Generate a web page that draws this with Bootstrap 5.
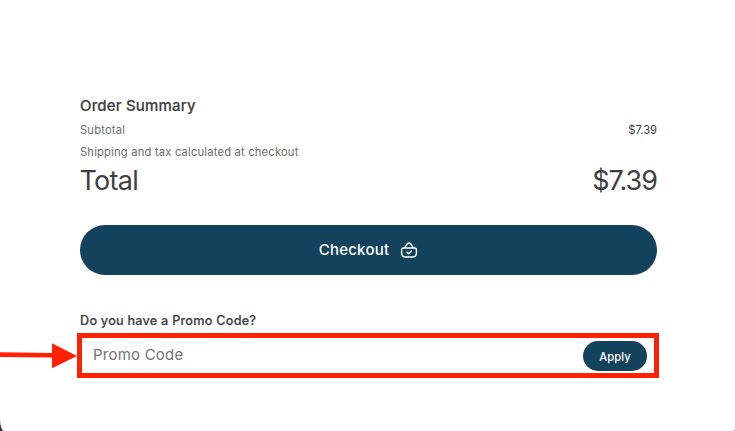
<!DOCTYPE html>
<html lang="en">
<head>
<meta charset="utf-8">
<meta name="viewport" content="width=device-width, initial-scale=1">
<title>Order Summary</title>
<link href="https://cdn.jsdelivr.net/npm/bootstrap@5.3.0/dist/css/bootstrap.min.css" rel="stylesheet">
<style>
body{background:#2f3136;font-family:Inter,"Liberation Sans",sans-serif;color:#3f3f3f}
.sheet{height:431px;padding:95px 78px 0 80px;background:#fff;border-radius:0 0 1px 4px / 0 0 2px 12px}
.sum-title{font-size:15px;line-height:22px;font-weight:500;letter-spacing:.18px;margin-bottom:2px;-webkit-text-stroke:.2px}
.sum-line{font-size:11.2px;line-height:22px;letter-spacing:.19px;color:#6c6c6c}
.sum-price{color:#3f3f3f;letter-spacing:-.05px}
.sum-total{font-size:27px;line-height:36px;letter-spacing:-.9px;margin-bottom:26px}
.sum-total span:first-child{margin-left:-.5px;letter-spacing:-.7px}
.sum-total span:last-child{margin-right:0;letter-spacing:-1px}
.btn-ink{--bs-btn-bg:#13425d;--bs-btn-color:#fff;--bs-btn-hover-bg:#0e3349;--bs-btn-hover-color:#fff;--bs-btn-border-color:transparent;border:0}
.btn-checkout{height:50px;font-size:15px;font-weight:500;letter-spacing:.25px;gap:11px}
.promo-label{font-size:12.7px;line-height:20px;font-weight:500;letter-spacing:.22px;margin-top:36px;-webkit-text-stroke:.2px}
.promo-box{height:45px;margin:2px -2px 0 -3px;border:5px solid #ff2200;padding:0 7px 0 11px}
.promo-box .form-control{font-size:15px;line-height:24px;letter-spacing:.22px;color:#3f3f3f;margin-bottom:2px}
.promo-box .form-control::placeholder{color:#747474;opacity:1}
.btn-apply{width:64px;height:30px;font-size:11.2px;line-height:32px;font-weight:500;letter-spacing:.1px}
.pointer{left:0;top:340px}
</style>
</head>
<body class="overflow-hidden">
<main class="sheet">
  <h1 class="sum-title"><span>Order Summary</span></h1>
  <div class="sum-line d-flex justify-content-between"><span>Subtotal</span><span class="sum-price">$7.39</span></div>
  <div class="sum-line"><span>Shipping and tax calculated at checkout</span></div>
  <div class="sum-total d-flex justify-content-between"><span>Total</span><span>$7.39</span></div>
  <button class="btn btn-ink btn-checkout rounded-pill w-100 p-0 d-flex align-items-center justify-content-center" type="button">
    <span>Checkout</span>
    <svg width="18" height="18" viewBox="0 0 18 18" fill="none" stroke="#fff" stroke-width="1.4" stroke-linecap="round" stroke-linejoin="round" aria-hidden="true">
      <path d="M3.500 7h11q1.900 0 1.900 1.900V12q0 4-4 4H5.600q-4 0-4-4V8.900Q1.600 7 3.500 7zM4.600 6.800 7.200 3q1.800-2 3.600 0l2.600 3.800M7 11.200l1.500 1.500 2.800-2.800"/>
    </svg>
  </button>
  <label class="promo-label d-block" for="promo"><span>Do you have a Promo Code?</span></label>
  <div class="promo-box d-flex align-items-center">
    <input id="promo" class="form-control border-0 bg-transparent p-0 shadow-none" type="text" placeholder="Promo Code">
    <button class="btn btn-ink btn-apply rounded-pill p-0 flex-shrink-0" type="button">Apply</button>
  </div>
</main>
<svg class="pointer position-absolute" width="78" height="32" viewBox="0 0 78 32" fill="#ff2200" aria-hidden="true">
  <path d="M0 12.200 52 12.900V3.200L77 16 52 28.200V17.500L0 16.900z"/>
</svg>
<script src="https://cdn.jsdelivr.net/npm/bootstrap@5.3.0/dist/js/bootstrap.bundle.min.js"></script>
</body>
</html>
